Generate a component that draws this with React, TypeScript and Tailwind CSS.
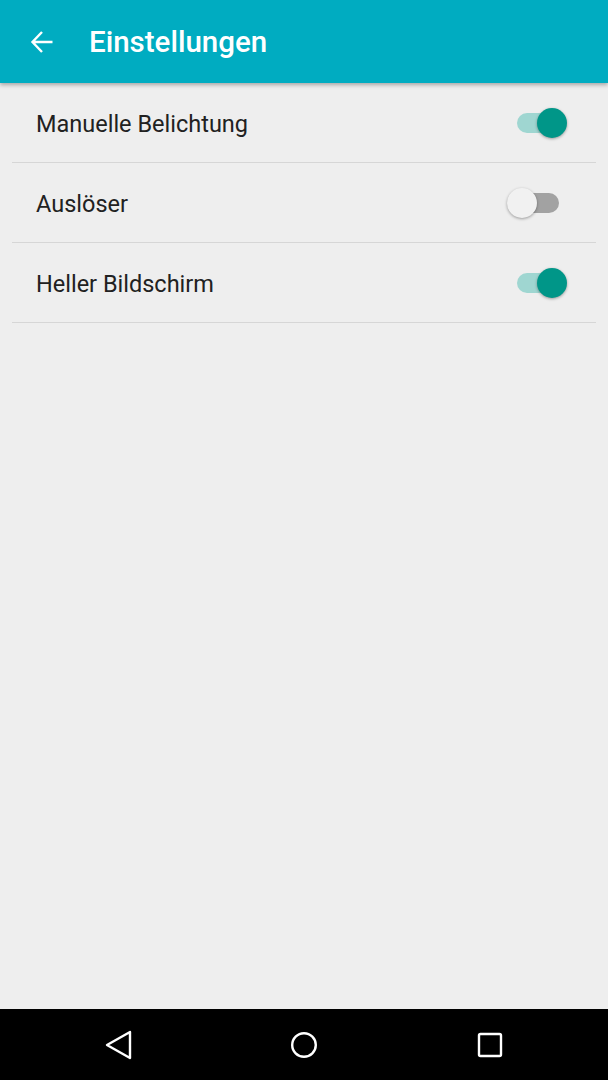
import { useState } from 'react';

interface SettingRowProps {
    label: string;
    checked: boolean;
    onToggle: () => void;
}

function Switch({ checked, onToggle }: { checked: boolean; onToggle: () => void }) {
    return (
        <button type="button" onClick={onToggle} className="relative w-[62px] h-[32px] shrink-0">
            <span
                className={`absolute left-[10px] top-[6px] w-[42px] h-[20px] rounded-full ${
                    checked ? 'bg-[#9fd6d1]' : 'bg-[#a2a2a2]'
                }`}
            />
            <span
                className={`absolute top-[1px] w-[30px] h-[30px] rounded-full shadow-[0_1px_3px_rgba(0,0,0,0.35)] ${
                    checked ? 'left-[30px] bg-[#009688]' : 'left-0 bg-[#f1f1f1]'
                }`}
            />
        </button>
    );
}

function SettingRow({ label, checked, onToggle }: SettingRowProps) {
    return (
        <div className="mx-3 h-[80px] flex items-center justify-between border-b border-[#d6d6d6] pl-6 pr-[27px]">
            <span className="text-[23.5px] leading-none text-[#212121] pt-[4px]">{label}</span>
            <Switch checked={checked} onToggle={onToggle} />
        </div>
    );
}

export default function App() {
    const [manual, setManual] = useState(true);
    const [shutter, setShutter] = useState(false);
    const [bright, setBright] = useState(true);

    return (
        <div className="w-[608px] h-[1080px] flex flex-col bg-[#eeeeee] font-['Roboto',sans-serif] overflow-hidden">
            {/* Toolbar */}
            <div className="relative h-[83px] shrink-0 bg-[#00acc1] flex items-center shadow-[0_2px_4px_rgba(0,0,0,0.3)] z-10">
                <button type="button" className="w-[82px] h-full flex items-center justify-center pl-[1px]">
                    <svg width="24" height="24" viewBox="0 0 24 24" fill="none">
                        <path d="M22.5 12H3M12 2L2.5 12L12 22" stroke="white" strokeWidth="2.4" />
                    </svg>
                </button>
                <h1 className="ml-[7px] text-[29.5px] leading-none font-medium text-white pt-[3px]">Einstellungen</h1>
            </div>

            {/* Settings list */}
            <div className="flex-1">
                <SettingRow label="Manuelle Belichtung" checked={manual} onToggle={() => setManual(!manual)} />
                <SettingRow label="Auslöser" checked={shutter} onToggle={() => setShutter(!shutter)} />
                <SettingRow label="Heller Bildschirm" checked={bright} onToggle={() => setBright(!bright)} />
            </div>

            {/* Navigation bar */}
            <div className="h-[71px] shrink-0 bg-black flex items-center pl-[104px] gap-[158px]">
                <svg width="28" height="32" viewBox="0 0 28 32" fill="none">
                    <path d="M26 3L3 16L26 29Z" stroke="white" strokeWidth="2.4" strokeLinejoin="round" />
                </svg>
                <svg width="28" height="28" viewBox="0 0 28 28" fill="none">
                    <circle cx="14" cy="14" r="11.8" stroke="white" strokeWidth="2.4" />
                </svg>
                <svg width="28" height="28" viewBox="0 0 28 28" fill="none">
                    <rect x="3" y="3" width="22" height="22" rx="1.5" stroke="white" strokeWidth="2.4" />
                </svg>
            </div>
        </div>
    );
}
